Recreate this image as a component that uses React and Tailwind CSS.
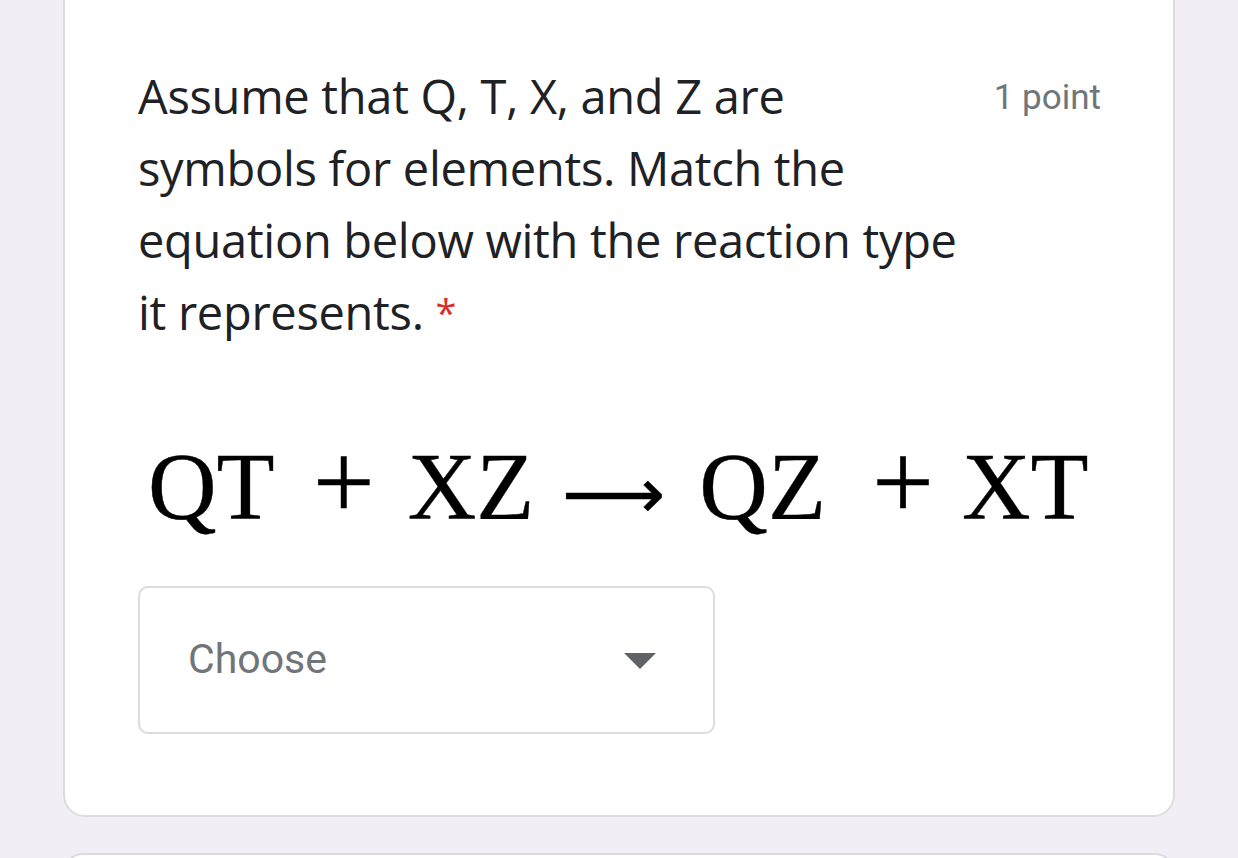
import React from "react";

export default function App() {
  return (
    <div className="min-h-screen w-full overflow-hidden bg-[#f1eef5]">
      <div className="pl-[63px] w-[1175px]">
        {/* question card */}
        <div className="-mt-[20px] bg-white border-2 border-[#dadce0] rounded-[22px] pl-[73px] pr-[72px] pt-[78px] pb-[81px]">
          <div className="flex justify-between items-start">
            <h2
              className="text-[47px] leading-[72px] text-[#202124] tracking-[-0.3px]"
              style={{ fontFamily: '"Open Sans", Lato, sans-serif' }}
            >
              <span className="block">Assume that Q, T, X, and Z are</span>
              <span className="block">symbols for elements. Match the</span>
              <span className="block">equation below with the reaction type</span>
              <span className="block">
                it represents. <span className="text-[#d93025] align-top text-[38px]">*</span>
              </span>
            </h2>
            <span
              className="mt-[2px] text-[35px] leading-[72px] text-[#70757a]"
              style={{ fontFamily: "Roboto, sans-serif" }}
            >
              1 point
            </span>
          </div>

          {/* equation */}
          <div
            className="mt-[84px] pl-[10px] h-[100px] flex items-baseline text-[95px] leading-[100px] text-black whitespace-nowrap [-webkit-text-stroke:0.4px_black]"
            style={{ fontFamily: '"Liberation Serif", serif' }}
          >
            <span>QT</span>
            <span className="ml-[38px] text-[110px]">+</span>
            <span className="ml-[33px]">XZ</span>
            <span className="ml-[28px] text-[72px]">⟶</span>
            <span className="ml-[34px]">QZ</span>
            <span className="ml-[46px] text-[110px]">+</span>
            <span className="ml-[28px]">XT</span>
          </div>

          {/* dropdown */}
          <div className="mt-[54px] w-[577px] h-[148px] border-2 border-[#dadce0] rounded-[10px] flex items-center justify-between pl-[48px] pr-[57px]">
            <span
              className="text-[41px] text-[#70757a]"
              style={{ fontFamily: "Roboto, sans-serif" }}
            >
              Choose
            </span>
            <svg width="32" height="16" viewBox="0 0 32 16" className="mt-[2px]">
              <path d="M0 0 L32 0 L16 16 Z" fill="#5f6368" />
            </svg>
          </div>
        </div>

        {/* next card peeking */}
        <div className="mt-[36px] h-[40px] bg-white border-2 border-[#dadce0] rounded-[22px]" />
      </div>
    </div>
  );
}
